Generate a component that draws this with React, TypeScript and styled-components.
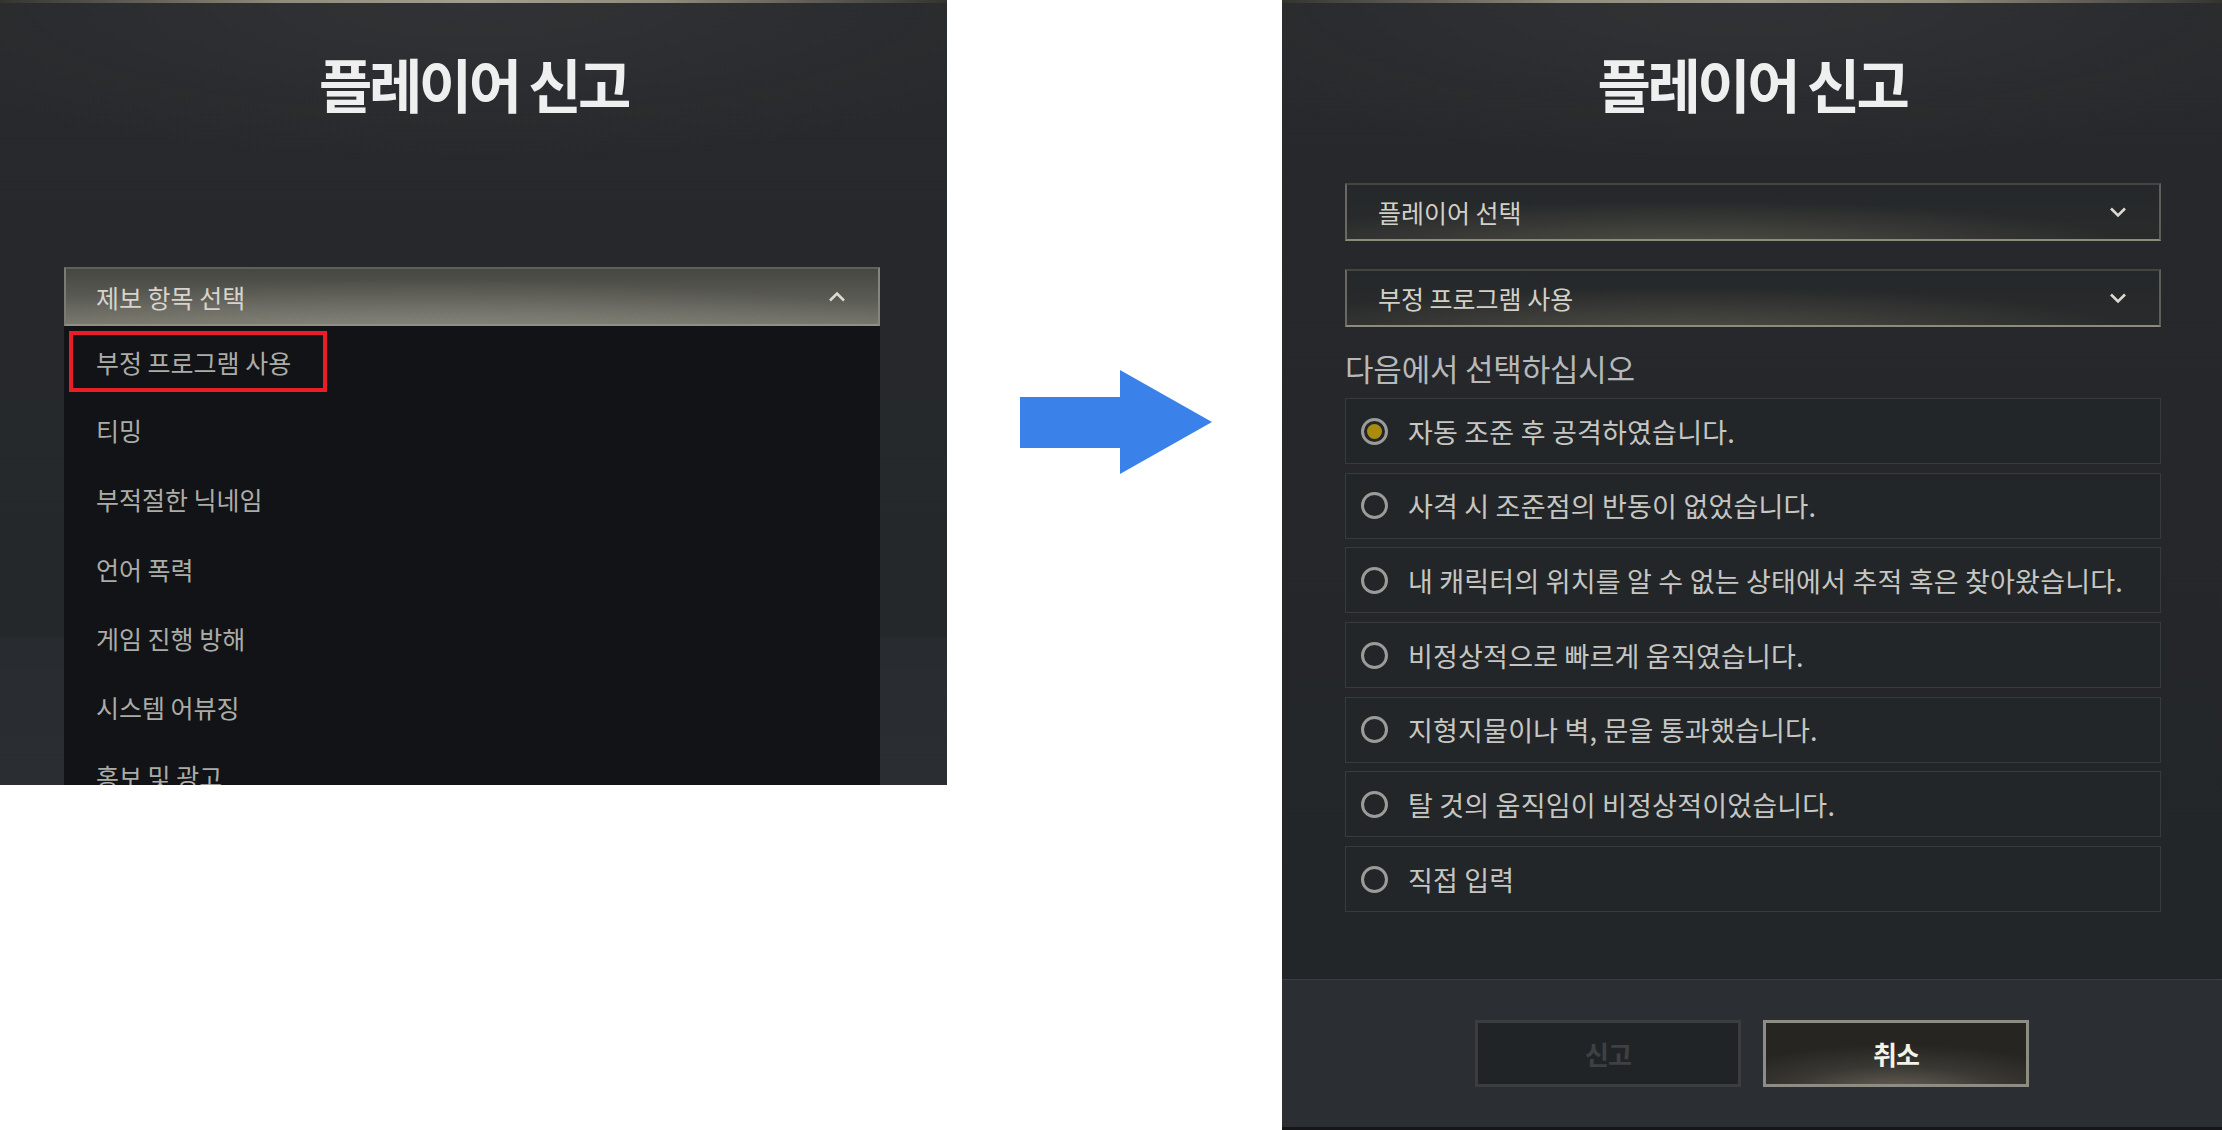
import React from 'react';
import styled, { createGlobalStyle } from 'styled-components';

const GlobalStyle = createGlobalStyle`
  html, body {
    margin: 0;
    padding: 0;
    background: #ffffff;
  }
  body {
    font-family: 'Noto Sans CJK KR', 'Noto Sans', sans-serif;
  }
`;

const reportKinds = ['부정 프로그램 사용', '티밍', '부적절한 닉네임', '언어 폭력', '게임 진행 방해', '시스템 어뷰징', '홍보 및 광고'];

const reasons = [
  '자동 조준 후 공격하였습니다.',
  '사격 시 조준점의 반동이 없었습니다.',
  '내 캐릭터의 위치를 알 수 없는 상태에서 추적 혹은 찾아왔습니다.',
  '비정상적으로 빠르게 움직였습니다.',
  '지형지물이나 벽, 문을 통과했습니다.',
  '탈 것의 움직임이 비정상적이었습니다.',
  '직접 입력',
];

const Chevron = ({ up }: { up?: boolean }) => (
  <svg width="18" height="11" viewBox="0 0 18 11">
    <polyline
      points={up ? '2,9.5 9,2.5 16,9.5' : '2,1.5 9,8.5 16,1.5'}
      fill="none"
      stroke="#dcdad0"
      strokeWidth="2.6"
    />
  </svg>
);

export default function App() {
  return (
    <>
      <GlobalStyle />
      <Stage>
        <Panel $w={947} $h={785} $split={634}>
          <Title>플레이어 신고</Title>
          <OpenSelect>
            <span>제보 항목 선택</span>
            <Chevron up />
          </OpenSelect>
          <KindList>
            {reportKinds.map((k, i) => (
              <KindItem key={k}>{i === 0 ? <Marked>{k}</Marked> : k}</KindItem>
            ))}
          </KindList>
        </Panel>

        <ArrowSlot>
          <svg width="193" height="105" viewBox="0 0 193 105">
            <polygon points="0,27 100,27 100,0 192,52 100,104 100,78 0,78" fill="#3a82e9" />
          </svg>
        </ArrowSlot>

        <Panel $w={940} $h={1130}>
          <Title>플레이어 신고</Title>
          <Body>
            <Select>
              <span>플레이어 선택</span>
              <Chevron />
            </Select>
            <Select>
              <span>부정 프로그램 사용</span>
              <Chevron />
            </Select>
            <Label>다음에서 선택하십시오</Label>
            <Options>
              {reasons.map((r, i) => (
                <Option key={r}>
                  <Radio $checked={i === 0} />
                  {r}
                </Option>
              ))}
            </Options>
          </Body>
          <Footer>
            <Button disabled>신고</Button>
            <Button $primary>취소</Button>
          </Footer>
        </Panel>
      </Stage>
    </>
  );
}

const Stage = styled.div`
  display: flex;
  align-items: flex-start;
  width: 2222px;
  height: 1130px;
`;

const Panel = styled.section<{ $w: number; $h: number; $split?: number }>`
  box-sizing: border-box;
  display: flex;
  flex-direction: column;
  flex-shrink: 0;
  width: ${(p) => p.$w}px;
  height: ${(p) => p.$h}px;
  overflow: hidden;
  border-top: 3px solid;
  border-image: linear-gradient(90deg, #34342f 0%, #8f8b7d 30%, #a39f90 50%, #8f8b7d 70%, #34342f 100%) 1;
  background: radial-gradient(ellipse 70% 160px at 50% 0, rgba(255, 255, 255, 0.045), transparent),
    ${(p) =>
      p.$split
        ? `linear-gradient(180deg, #27292c 0, #25282b ${p.$split}px, #282b2f ${p.$split + 1}px, #2a2d31 100%)`
        : 'linear-gradient(180deg, #27292c 0, #222528 100%)'};
`;

const Title = styled.h1`
  margin: 0;
  padding-top: 51px;
  height: 58px;
  text-align: center;
  font-size: 58px;
  font-weight: 700;
  line-height: 58px;
  letter-spacing: -3.5px;
  color: #efefef;
`;

const OpenSelect = styled.div`
  box-sizing: border-box;
  display: flex;
  align-items: center;
  justify-content: space-between;
  margin: 155px 67px 0 64px;
  height: 59px;
  padding: 0 32px 0 30px;
  border: 2px solid;
  border-color: #5f605a #85857b #8f8f84 #7a7a72;
  background: radial-gradient(ellipse 60% 90% at 45% 110%, rgba(150, 148, 136, 0.45), transparent),
    linear-gradient(180deg, #464742 0%, #5b5b55 55%, #74746b 100%);
  font-size: 25px;
  color: #d6d4cb;
`;

const KindList = styled.ul`
  flex: 1;
  margin: 0 67px 0 64px;
  padding: 0;
  list-style: none;
  background: #111316;
  overflow: hidden;
`;

const KindItem = styled.li`
  display: flex;
  align-items: center;
  height: 69.3px;
  padding-left: 32px;
  font-size: 25px;
  color: #acaca7;
`;

const Marked = styled.span`
  display: inline-flex;
  align-items: center;
  box-sizing: border-box;
  height: 61px;
  margin: 2px 0 0 -27px;
  padding: 0 32px 0 23px;
  border: 4px solid #e81d26;
`;

const ArrowSlot = styled.div`
  flex: 1;
  display: flex;
  justify-content: center;
  margin-top: 370px;
  padding-left: 4px;
`;

const Body = styled.div`
  display: flex;
  flex-direction: column;
  padding: 0 61px 0 63px;
`;

const Select = styled.div`
  box-sizing: border-box;
  display: flex;
  align-items: center;
  justify-content: space-between;
  height: 58px;
  margin-top: 71px;
  padding: 0 32px 0 31px;
  border: 2px solid;
  border-color: #43453f #5e5e56 #8d8b7b #6a695f;
  background: radial-gradient(ellipse 55% 85% at 42% 115%, rgba(110, 106, 92, 0.55), transparent),
    linear-gradient(180deg, #25282a 0%, #292b2b 100%);
  font-size: 25px;
  color: #d2d0c7;

  & + & {
    margin-top: 28px;
  }
`;

const Label = styled.div`
  margin-top: 21px;
  font-size: 31px;
  line-height: 40px;
  letter-spacing: -0.2px;
  color: #b6b8ba;
`;

const Options = styled.div`
  display: flex;
  flex-direction: column;
  gap: 8.7px;
  margin-top: 10px;
`;

const Option = styled.label`
  box-sizing: border-box;
  display: flex;
  align-items: center;
  gap: 20px;
  height: 66px;
  padding-left: 15px;
  border: 1px solid #383b3e;
  background: #232629;
  font-size: 27px;
  letter-spacing: 0.2px;
  color: #c6c6c3;
`;

const Radio = styled.span<{ $checked?: boolean }>`
  box-sizing: border-box;
  flex-shrink: 0;
  width: 27px;
  height: 27px;
  padding: 3px;
  border-radius: 50%;
  border: 3px solid #9b9b98;
  background: ${(p) => (p.$checked ? '#a98b0e' : 'transparent')};
  background-clip: content-box;
`;

const Footer = styled.footer`
  display: flex;
  justify-content: center;
  align-items: center;
  gap: 22px;
  margin-top: auto;
  height: 151px;
  box-sizing: border-box;
  border-top: 1px solid #3b3e42;
  border-bottom: 3px solid #141618;
  background: #2b2e33;
`;

const Button = styled.button<{ $primary?: boolean }>`
  width: 266px;
  height: 67px;
  border: 3px solid ${(p) => (p.$primary ? '#8e8d83' : '#3b3d3f')};
  background: ${(p) =>
    p.$primary
      ? 'radial-gradient(ellipse 75% 80% at 50% 115%, #6a655a 0%, #3a3833 55%, #262522 100%)'
      : '#212427'};
  font-family: inherit;
  font-size: 26px;
  font-weight: 700;
  letter-spacing: -1px;
  color: ${(p) => (p.$primary ? '#f4f2e4' : '#3e4144')};
`;
